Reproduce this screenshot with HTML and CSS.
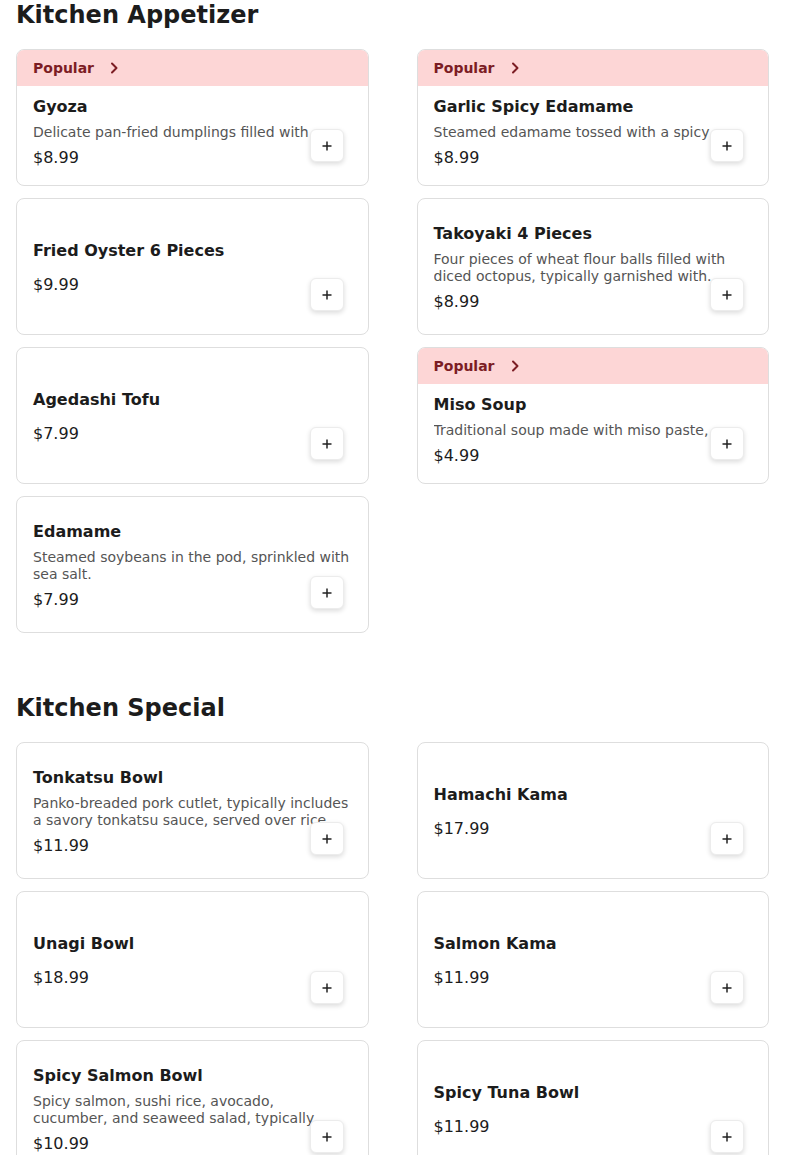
FILE: index.html
```html
<!DOCTYPE html>
<html>
<head>
<meta charset="utf-8">
<link rel="stylesheet" href="styles.css">
</head>
<body>
<div class="page">
  <section class="section">
    <h2 class="section-title">Kitchen Appetizer</h2>
    <div class="grid">
      <div class="card">
        <div class="banner"><span>Popular</span><svg class="chev" viewBox="0 0 16 16"><path d="M6 3.5 L10.5 8 L6 12.5" /></svg></div>
        <div class="body">
          <div class="name">Gyoza</div>
          <div class="desc one">Delicate pan-fried dumplings filled with seasoned pork and vegetables.</div>
          <div class="price">$8.99</div>
        </div>
        <button class="add"><svg viewBox="0 0 10 10"><path d="M5 0.5 V9.5 M0.5 5 H9.5" /></svg></button>
      </div>
      <div class="card">
        <div class="banner"><span>Popular</span><svg class="chev" viewBox="0 0 16 16"><path d="M6 3.5 L10.5 8 L6 12.5" /></svg></div>
        <div class="body">
          <div class="name">Garlic Spicy Edamame</div>
          <div class="desc one">Steamed edamame tossed with a spicy garlic sauce.</div>
          <div class="price">$8.99</div>
        </div>
        <button class="add"><svg viewBox="0 0 10 10"><path d="M5 0.5 V9.5 M0.5 5 H9.5" /></svg></button>
      </div>
      <div class="card">
        <div class="body">
          <div class="name">Fried Oyster 6 Pieces</div>
          <div class="price">$9.99</div>
        </div>
        <button class="add"><svg viewBox="0 0 10 10"><path d="M5 0.5 V9.5 M0.5 5 H9.5" /></svg></button>
      </div>
      <div class="card">
        <div class="body">
          <div class="name">Takoyaki 4 Pieces</div>
          <div class="desc">Four pieces of wheat flour balls filled with diced octopus, typically garnished with.</div>
          <div class="price">$8.99</div>
        </div>
        <button class="add"><svg viewBox="0 0 10 10"><path d="M5 0.5 V9.5 M0.5 5 H9.5" /></svg></button>
      </div>
      <div class="card">
        <div class="body">
          <div class="name">Agedashi Tofu</div>
          <div class="price">$7.99</div>
        </div>
        <button class="add"><svg viewBox="0 0 10 10"><path d="M5 0.5 V9.5 M0.5 5 H9.5" /></svg></button>
      </div>
      <div class="card">
        <div class="banner"><span>Popular</span><svg class="chev" viewBox="0 0 16 16"><path d="M6 3.5 L10.5 8 L6 12.5" /></svg></div>
        <div class="body">
          <div class="name">Miso Soup</div>
          <div class="desc one">Traditional soup made with miso paste, featuring tofu, seaweed and green onion.</div>
          <div class="price">$4.99</div>
        </div>
        <button class="add"><svg viewBox="0 0 10 10"><path d="M5 0.5 V9.5 M0.5 5 H9.5" /></svg></button>
      </div>
      <div class="card">
        <div class="body">
          <div class="name">Edamame</div>
          <div class="desc">Steamed soybeans in the pod, sprinkled with sea salt.</div>
          <div class="price">$7.99</div>
        </div>
        <button class="add"><svg viewBox="0 0 10 10"><path d="M5 0.5 V9.5 M0.5 5 H9.5" /></svg></button>
      </div>
    </div>
  </section>
  <section class="section">
    <h2 class="section-title">Kitchen Special</h2>
    <div class="grid">
      <div class="card">
        <div class="body">
          <div class="name">Tonkatsu Bowl</div>
          <div class="desc">Panko-breaded pork cutlet, typically includes a savory tonkatsu sauce, served over rice.</div>
          <div class="price">$11.99</div>
        </div>
        <button class="add"><svg viewBox="0 0 10 10"><path d="M5 0.5 V9.5 M0.5 5 H9.5" /></svg></button>
      </div>
      <div class="card">
        <div class="body">
          <div class="name">Hamachi Kama</div>
          <div class="price">$17.99</div>
        </div>
        <button class="add"><svg viewBox="0 0 10 10"><path d="M5 0.5 V9.5 M0.5 5 H9.5" /></svg></button>
      </div>
      <div class="card">
        <div class="body">
          <div class="name">Unagi Bowl</div>
          <div class="price">$18.99</div>
        </div>
        <button class="add"><svg viewBox="0 0 10 10"><path d="M5 0.5 V9.5 M0.5 5 H9.5" /></svg></button>
      </div>
      <div class="card">
        <div class="body">
          <div class="name">Salmon Kama</div>
          <div class="price">$11.99</div>
        </div>
        <button class="add"><svg viewBox="0 0 10 10"><path d="M5 0.5 V9.5 M0.5 5 H9.5" /></svg></button>
      </div>
      <div class="card">
        <div class="body">
          <div class="name">Spicy Salmon Bowl</div>
          <div class="desc">Spicy salmon, sushi rice, avocado, cucumber, and seaweed salad, typically topped with sesame.</div>
          <div class="price">$10.99</div>
        </div>
        <button class="add"><svg viewBox="0 0 10 10"><path d="M5 0.5 V9.5 M0.5 5 H9.5" /></svg></button>
      </div>
      <div class="card">
        <div class="body">
          <div class="name">Spicy Tuna Bowl</div>
          <div class="price">$11.99</div>
        </div>
        <button class="add"><svg viewBox="0 0 10 10"><path d="M5 0.5 V9.5 M0.5 5 H9.5" /></svg></button>
      </div>
    </div>
  </section>
</div>
</body>
</html>
```
FILE: styles.css
```css
html, body {
  margin: 0;
  padding: 0;
  background: #ffffff;
}
body {
  font-family: "DejaVu Sans", "Noto Sans", sans-serif;
  color: #1c1c1c;
}
.page {
  padding: 0 16px;
  display: flex;
  flex-direction: column;
  gap: 60px;
}
.section-title {
  margin: 0 0 18px 0;
  font-size: 24px;
  line-height: 31px;
  font-weight: 700;
  color: #1c1c1c;
}
.grid {
  display: grid;
  grid-template-columns: 1fr 1fr;
  column-gap: 48px;
  row-gap: 12px;
}
.card {
  position: relative;
  height: 137px;
  box-sizing: border-box;
  border: 1px solid #dedede;
  border-radius: 8px;
  background: #fff;
  display: flex;
  flex-direction: column;
  overflow: hidden;
}
.banner {
  height: 36px;
  flex: none;
  background: #fdd6d6;
  display: flex;
  align-items: center;
  gap: 12px;
  padding: 0 16px;
  font-size: 14px;
  font-weight: 700;
  color: #7c1d24;
}
.chev {
  width: 16px;
  height: 16px;
  fill: none;
  stroke: #7c1d24;
  stroke-width: 2;
  stroke-linecap: round;
  stroke-linejoin: round;
}
.body {
  flex: 1;
  display: flex;
  flex-direction: column;
  justify-content: center;
  padding: 2px 16px 0 16px;
  min-height: 0;
}
.card .banner + .body {
  padding-top: 0;
  padding-bottom: 6px;
}
.name {
  font-size: 16px;
  line-height: 24px;
  font-weight: 700;
  color: #1c1c1c;
  margin-bottom: 5px;
}
.desc {
  font-size: 14px;
  line-height: 17px;
  color: #555555;
  max-height: 34px;
  overflow: hidden;
}
.desc.one {
  max-height: 17px;
}
.price {
  font-size: 16px;
  line-height: 24px;
  color: #1c1c1c;
  margin-top: 5px;
}
.name + .price {
  margin-top: 5px;
}
.add {
  position: absolute;
  right: 24px;
  bottom: 23px;
  width: 34px;
  height: 33px;
  border: 1px solid #ececec;
  border-radius: 6px;
  background: #fff;
  box-shadow: 0 2px 5px rgba(0, 0, 0, 0.14);
  padding: 0;
  display: flex;
  align-items: center;
  justify-content: center;
}
.add svg {
  width: 10px;
  height: 10px;
  fill: none;
  stroke: #222222;
  stroke-width: 1.5;
}
```
